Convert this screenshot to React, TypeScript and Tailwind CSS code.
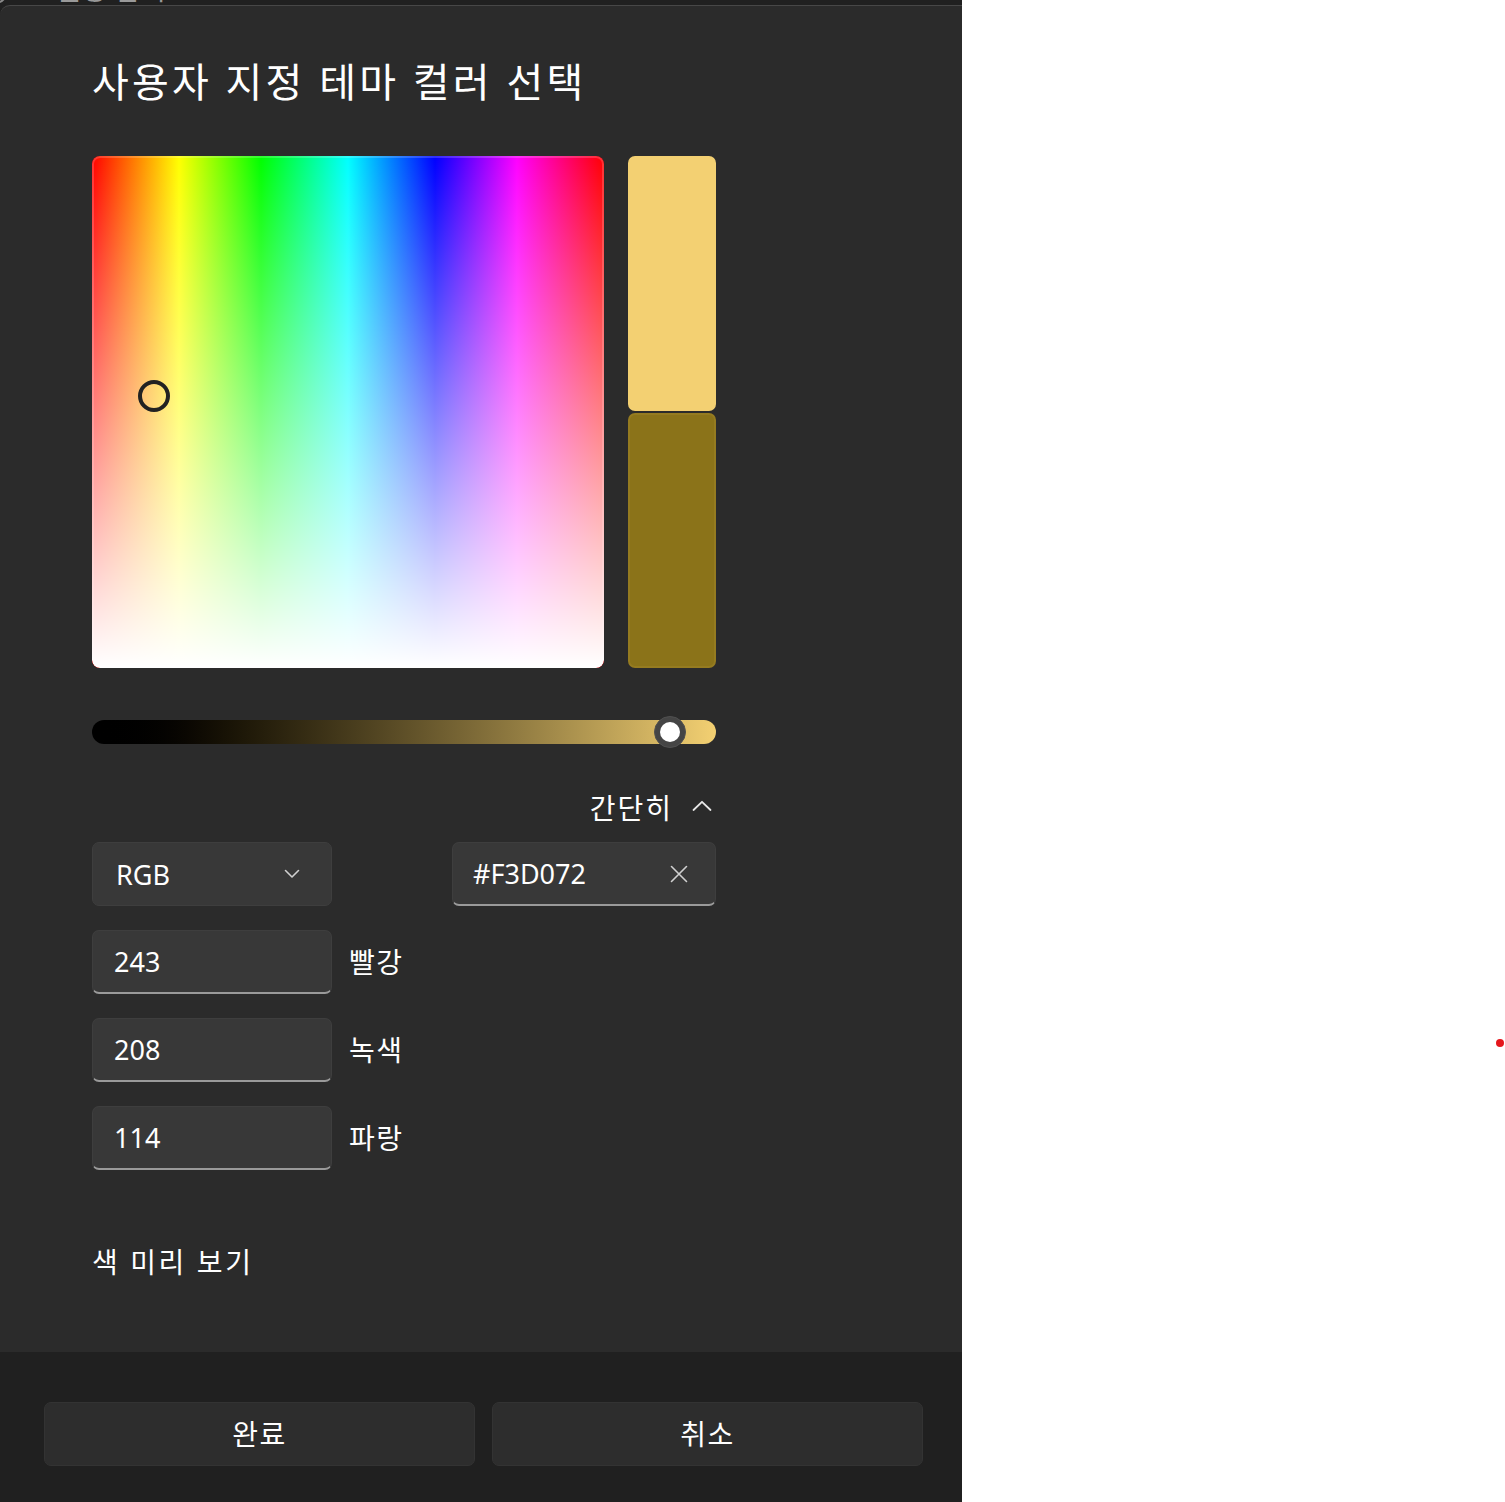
import React from "react";

const font = "font-['Noto_Sans','Noto_Sans_CJK_KR',sans-serif]";

function ChevronDown() {
  return (
    <svg width="16" height="10" viewBox="0 0 16 10" fill="none">
      <path d="M1.5 1.5 L8 8 L14.5 1.5" stroke="#d0d0d0" strokeWidth="1.6" strokeLinecap="round" strokeLinejoin="round" />
    </svg>
  );
}

function ChevronUp() {
  return (
    <svg width="20" height="12" viewBox="0 0 20 12" fill="none">
      <path d="M1.5 10 L10 1.8 L18.5 10" stroke="#e8e8e8" strokeWidth="1.8" strokeLinecap="round" strokeLinejoin="round" />
    </svg>
  );
}

function XIcon() {
  return (
    <svg width="18" height="18" viewBox="0 0 18 18" fill="none">
      <path d="M1.5 1.5 L16.5 16.5 M16.5 1.5 L1.5 16.5" stroke="#d0d0d0" strokeWidth="1.6" strokeLinecap="round" />
    </svg>
  );
}

function NumField({ value, label }: { value: string; label: string }) {
  return (
    <div className="flex items-center gap-[17px]">
      <div className="w-[240px] h-[64px] rounded-[7px] bg-[#383838] border border-[#3e3e3e] border-b-[2px] border-b-[#9a9a9a] flex items-center pl-[21px]">
        <span className="text-[27px] text-white leading-none">{value}</span>
      </div>
      <span className="text-[28px] text-white leading-none tracking-[1.5px]">{label}</span>
    </div>
  );
}

export default function App() {
  return (
    <div className={`relative w-[1505px] h-[1502px] bg-white flex ${font}`}>
      <div className="w-[962px] h-full flex flex-col bg-[#202020]">
        {/* strip of the window behind */}
        <div className="h-[5px] overflow-hidden relative">
          <div className="absolute left-[-18px] top-[-22px] w-[26px] h-[26px] rounded-full border-[2px] border-[#8a8a8a]" />
          <div className="absolute left-[55px] top-[-26px] text-[28px] text-[#9a9a9a] leading-[30px]">설정 검색</div>
        </div>
        {/* dialog body */}
        <div className="flex-1 bg-[#2b2b2b] border-t border-[#474747] rounded-tl-[10px] pl-[92px] pt-[50px] flex flex-col">
          <h1 className="text-[40px] leading-[52px] text-white font-normal tracking-[3.2px]">사용자 지정 테마 컬러 선택</h1>

          <div className="mt-[48px] flex gap-[24px]">
            <div className="relative w-[512px] h-[512px] rounded-[8px] overflow-hidden bg-[linear-gradient(to_right,#ff0000_0%,#ffff00_17%,#00ff00_33%,#00ffff_50%,#0000ff_67%,#ff00ff_83%,#ff0000_100%)]">
              <div className="absolute inset-0 bg-linear-to-b from-transparent to-white rounded-[8px] shadow-[inset_0_0_0_2px_rgba(255,255,255,0.18)]" />
              <div className="absolute left-[46px] top-[224px] w-[32px] h-[32px] rounded-full border-[4px] border-[#222222]" />
            </div>
            <div className="w-[88px] h-[512px] flex flex-col gap-[2px]">
              <div className="h-[255px] shrink-0 rounded-[7px] bg-[#f3d072]" />
              <div className="h-[255px] shrink-0 rounded-[7px] bg-[#8b7319] border-[2px] border-[#957b20]" />
            </div>
          </div>

          <div className="mt-[52px] relative w-[624px] h-[24px] rounded-full bg-linear-to-r from-black to-[#f3d072]">
            <div className="absolute left-[562px] top-[-4px] w-[32px] h-[32px] rounded-full bg-[#454545] border border-[#505050] flex items-center justify-center">
              <div className="w-[20px] h-[20px] rounded-full bg-white" />
            </div>
          </div>

          <div className="mt-[46px] w-[624px] h-[36px] flex items-center justify-end gap-[19px]">
            <span className="text-[28px] text-white leading-none tracking-[2px]">간단히</span>
            <span className="pr-[4px] pb-[4px]"><ChevronUp /></span>
          </div>

          <div className="mt-[16px] w-[624px] flex justify-between">
            <div className="w-[240px] h-[64px] rounded-[7px] bg-[#383838] border border-[#3e3e3e] flex items-center justify-between pl-[23px] pr-[31px]">
              <span className="text-[27px] text-white leading-none">RGB</span>
              <ChevronDown />
            </div>
            <div className="w-[264px] h-[64px] rounded-[7px] bg-[#383838] border border-[#3e3e3e] border-b-[2px] border-b-[#9a9a9a] flex items-center justify-between pl-[20px] pr-[27px]">
              <span className="text-[27px] text-white leading-none">#F3D072</span>
              <XIcon />
            </div>
          </div>

          <div className="mt-[24px] flex flex-col gap-[24px]">
            <NumField value="243" label="빨강" />
            <NumField value="208" label="녹색" />
            <NumField value="114" label="파랑" />
          </div>

          <div className="mt-[74px] h-[36px] flex items-center">
            <span className="text-[28px] text-white leading-none tracking-[2.6px]">색 미리 보기</span>
          </div>
        </div>
        {/* footer */}
        <div className="h-[150px] shrink-0 bg-[#202020] flex gap-[17px] pl-[44px] pt-[50px]">
          <div className="w-[431px] h-[64px] rounded-[7px] bg-[#2d2d2d] border border-[#333333] flex items-center justify-center">
            <span className="text-[28px] text-white leading-none tracking-[1.5px]">완료</span>
          </div>
          <div className="w-[431px] h-[64px] rounded-[7px] bg-[#2d2d2d] border border-[#333333] flex items-center justify-center">
            <span className="text-[28px] text-white leading-none tracking-[1.5px]">취소</span>
          </div>
        </div>
      </div>
      <div className="absolute left-[1496px] top-[1039px] w-[8px] h-[8px] rounded-full bg-[#e5161c]" />
    </div>
  );
}
